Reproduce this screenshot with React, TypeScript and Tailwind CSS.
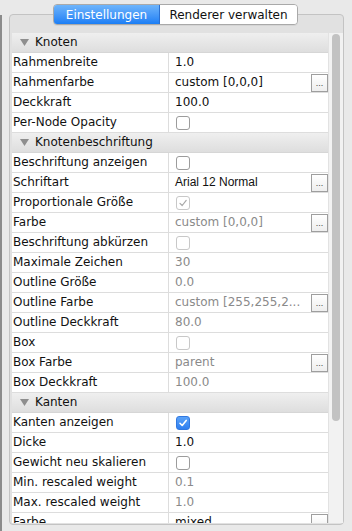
import React from "react";

type Val =
  | { kind: "text"; text: string; disabled?: boolean; button?: boolean; arial?: boolean }
  | { kind: "check"; checked?: boolean; disabled?: boolean; blue?: boolean };

type Row = { label: string; value: Val };
type Section = { title: string; rows: Row[] };

const sections: Section[] = [
  {
    title: "Knoten",
    rows: [
      { label: "Rahmenbreite", value: { kind: "text", text: "1.0" } },
      { label: "Rahmenfarbe", value: { kind: "text", text: "custom [0,0,0]", button: true } },
      { label: "Deckkraft", value: { kind: "text", text: "100.0" } },
      { label: "Per-Node Opacity", value: { kind: "check" } },
    ],
  },
  {
    title: "Knotenbeschriftung",
    rows: [
      { label: "Beschriftung anzeigen", value: { kind: "check" } },
      { label: "Schriftart", value: { kind: "text", text: "Arial 12 Normal", button: true, arial: true } },
      { label: "Proportionale Größe", value: { kind: "check", checked: true, disabled: true } },
      { label: "Farbe", value: { kind: "text", text: "custom [0,0,0]", disabled: true, button: true } },
      { label: "Beschriftung abkürzen", value: { kind: "check", disabled: true } },
      { label: "Maximale Zeichen", value: { kind: "text", text: "30", disabled: true } },
      { label: "Outline Größe", value: { kind: "text", text: "0.0", disabled: true } },
      { label: "Outline Farbe", value: { kind: "text", text: "custom [255,255,2...", disabled: true, button: true } },
      { label: "Outline Deckkraft", value: { kind: "text", text: "80.0", disabled: true } },
      { label: "Box", value: { kind: "check", disabled: true } },
      { label: "Box Farbe", value: { kind: "text", text: "parent", disabled: true, button: true } },
      { label: "Box Deckkraft", value: { kind: "text", text: "100.0", disabled: true } },
    ],
  },
  {
    title: "Kanten",
    rows: [
      { label: "Kanten anzeigen", value: { kind: "check", checked: true, blue: true } },
      { label: "Dicke", value: { kind: "text", text: "1.0" } },
      { label: "Gewicht neu skalieren", value: { kind: "check" } },
      { label: "Min. rescaled weight", value: { kind: "text", text: "0.1", disabled: true } },
      { label: "Max. rescaled weight", value: { kind: "text", text: "1.0", disabled: true } },
      { label: "Farbe", value: { kind: "text", text: "mixed", button: true } },
    ],
  },
];

function Checkbox({ checked, disabled, blue }: { checked?: boolean; disabled?: boolean; blue?: boolean }) {
  if (blue) {
    return (
      <div className="w-[14px] h-[14px] rounded-[3px] bg-gradient-to-b from-[#5aa2f8] to-[#2f7ff0] border border-[#3178e0] flex items-center justify-center">
        <svg width="10" height="10" viewBox="0 0 10 10">
          <path d="M2 5.3 L4.2 7.5 L8.2 2.4" stroke="white" strokeWidth="1.6" fill="none" strokeLinecap="round" strokeLinejoin="round" />
        </svg>
      </div>
    );
  }
  return (
    <div
      className={
        "w-[14px] h-[14px] rounded-[3px] bg-white border flex items-center justify-center " +
        (disabled ? "border-[#c8c8c8]" : "border-[#9c9c9c]")
      }
    >
      {checked && (
        <svg width="10" height="10" viewBox="0 0 10 10">
          <path d="M2 5.3 L4.2 7.5 L8.2 2.4" stroke="#a8a8a8" strokeWidth="1.2" fill="none" strokeLinecap="round" strokeLinejoin="round" />
        </svg>
      )}
    </div>
  );
}

function DotsButton() {
  return (
    <div className="w-[17px] h-[18px] mt-[1px] shrink-0 border border-[#9e9e9e] bg-gradient-to-b from-white to-[#eeeeee] flex items-end justify-center">
      <span className="text-[9px] leading-none pb-[3px] text-[#444]" style={{ fontFamily: "'Liberation Sans', sans-serif" }}>
        ...
      </span>
    </div>
  );
}

function ValueCell({ v }: { v: Val }) {
  if (v.kind === "check") {
    return (
      <div className="flex-1 flex items-center pl-[7px]">
        <Checkbox checked={v.checked} disabled={v.disabled} blue={v.blue} />
      </div>
    );
  }
  return (
    <div className="flex-1 flex items-start min-w-0">
      <div
        className={
          "flex-1 min-w-0 pl-[6px] h-[19px] leading-[19px] whitespace-nowrap overflow-hidden " +
          (v.disabled ? "text-[#8a8a8a]" : "text-[#111]")
        }
        style={v.arial ? { fontFamily: "'Liberation Sans', Arial, sans-serif" } : undefined}
      >
        {v.text}
      </div>
      {v.button && <DotsButton />}
    </div>
  );
}

function PropRow({ row }: { row: Row }) {
  return (
    <div className="flex h-[20px] shrink-0 bg-white border-b border-[#dddddd]">
      <div className="w-[157px] shrink-0 pl-[1px] h-[19px] leading-[19px] text-[#111] whitespace-nowrap border-r border-[#dddddd]">
        {row.label}
      </div>
      <ValueCell v={row.value} />
    </div>
  );
}

function SectionHeader({ title }: { title: string }) {
  return (
    <div className="flex items-center h-[20px] shrink-0 bg-gradient-to-b from-[#efefef] to-[#dedede] border-b border-[#d6d6d6]">
      <div className="w-[23px] shrink-0 flex justify-end pr-[6px]">
        <svg width="9" height="7" viewBox="0 0 9 7">
          <polygon points="0,0 9,0 4.5,7" fill="#8e8e8e" />
        </svg>
      </div>
      <span className="text-[#111] leading-[19px]">{title}</span>
    </div>
  );
}

export default function App() {
  return (
    <div
      className="w-[352px] h-[531px] bg-[#e9e9e9] flex overflow-hidden text-[12px]"
      style={{ fontFamily: "'DejaVu Sans', 'Noto Sans', sans-serif" }}
    >
      <div className="w-[2px] mt-[15px] bg-[#8b8b8b] shrink-0" />
      <div className="flex-1 flex flex-col pl-[7px] pr-[8px]">
        <div className="relative z-10 flex justify-center pt-[4px] pr-[3px] pl-[1px]">
          <div className="flex h-[21px] rounded-[4px] overflow-hidden border border-[#a9a9a9] shadow-[0_1px_0_rgba(0,0,0,0.05)]">
            <div className="w-[106px] flex items-center justify-center bg-gradient-to-b from-[#6db4fb] to-[#1a7ef5] text-white border-r border-[#2a6fd0]">
              Einstellungen
            </div>
            <div className="w-[137px] flex items-center justify-center bg-white text-[#111]">
              Renderer verwalten
            </div>
          </div>
        </div>
        <div className="-mt-[11px] h-[511px] border border-[#c3c3c3] rounded-[4px] bg-[#e1e1e1] pt-[18px] pl-[2px] flex">
          <div className="w-[316px] h-[490px] overflow-hidden flex flex-col">
            {sections.map((s) => (
              <React.Fragment key={s.title}>
                <SectionHeader title={s.title} />
                {s.rows.map((r, i) => (
                  <PropRow key={s.title + i} row={r} />
                ))}
              </React.Fragment>
            ))}
          </div>
          <div className="w-[15px] h-[490px] bg-[#f2f2f2] border-l border-[#e2e2e2]">
            <div className="ml-[3px] mt-[1px] w-[8px] h-[387px] rounded-full bg-[#c2c2c2]" />
          </div>
        </div>
      </div>
    </div>
  );
}
